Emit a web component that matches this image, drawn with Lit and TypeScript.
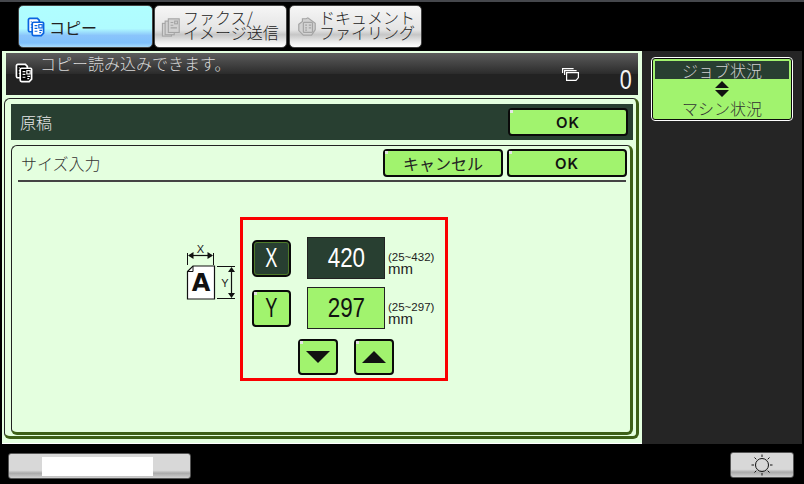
import { LitElement, html, css, svg } from "lit";
import { customElement } from "lit/decorators.js";

const copyIcon = (fill: string, stroke: string, inner: string) => svg`
<svg width="18" height="20" viewBox="0 0 19 21">
  <path d="M3 1.500h8l2 2v12H3a1.500 1.500 0 0 1-1.500-1.500V3A1.500 1.500 0 0 1 3 1.500z" fill="${fill}" stroke="${stroke}" stroke-width="1.800"/>
  <path d="M7 5.500h9.500a1.500 1.500 0 0 1 1 1V17l-2.500 2.500H7a1.500 1.500 0 0 1-1.500-1.500V7A1.500 1.500 0 0 1 7 5.500z" fill="${fill}" stroke="${stroke}" stroke-width="1.800"/>
  <path d="M4 5h1M4 8h1M4 11h1M8 9h3M8 12h3M8 15h3" stroke="${inner}" stroke-width="1.200"/>
  <rect x="12.500" y="8" width="3.500" height="3.500" fill="none" stroke="${inner}" stroke-width="1.200"/>
  <path d="M13 14h3M13 16.500h2" stroke="${inner}" stroke-width="1.200"/>
</svg>`;

const faxIcon = svg`
<svg width="21" height="20" viewBox="0 0 22 22" fill="#d2d2d2" stroke="#a4a4a4" stroke-width="1.200">
  <rect x="1" y="7" width="10" height="14"/><rect x="4" y="4.500" width="10" height="15"/><rect x="7.500" y="2" width="12" height="15"/>
  <path d="M10 6h3M10 9h3M10 12h7" fill="none"/><rect x="14.500" y="4.500" width="3" height="3" fill="none"/>
</svg>`;

const docIcon = svg`
<svg width="22" height="21" viewBox="0 0 22 23" fill="#d2d2d2" stroke="#a4a4a4" stroke-width="1.300">
  <path d="M2 9l4-3v-3h4l2-1 8 6v7l-4 6H7l-5-5z"/>
  <rect x="7" y="7" width="10" height="11" rx="1"/>
  <path d="M9 10h2M9 13h2M9 15.500h2M13 10h2.500M13 13h2.500" fill="none"/>
</svg>`;

const jobsIcon = svg`
<svg width="17" height="13" viewBox="0 0 17 13" fill="none" stroke="#fff" stroke-width="1.200">
  <path d="M.6 5V.6h11M2.600 7V2.600h12"/>
  <path d="M4.600 4.600h11.800v5l-2.400 2.800H4.600z" fill="#252525"/>
</svg>`;

const paperDiagram = svg`
<svg width="50" height="60" viewBox="0 0 50 60">
  <g fill="none" stroke="#111" stroke-width="1">
    <path d="M1.500 10v12M27.500 10v12M31 23.500h18M31 55.500h18"/>
    <path d="M3 12.500h23" stroke-width="1.200"/>
    <path d="M45.500 26v27" stroke-width="1.200"/>
    <path d="M1.500 28.500l5.500-5.500h21.500v33H1.500z" fill="#fff" stroke-width="1.200"/>
    <path d="M1.500 28.500h5.500V23" stroke-width="1"/>
  </g>
  <path d="M2 12.500l5.500-3.500v7zM27 12.500l-5.500-3.500v7zM45.500 24l-3.500 5h7zM45.500 55l-3.500-5h7z" fill="#111"/>
  <text class="lx" x="14.500" y="9.500" text-anchor="middle">X</text>
  <text class="lx" x="39" y="44" text-anchor="middle">Y</text>
  <text class="la" x="15" y="48" text-anchor="middle">A</text>
</svg>`;

const sun = svg`
<svg width="22" height="22" viewBox="0 0 22 22" fill="none" stroke="#111" stroke-width="1">
  <circle cx="11" cy="11" r="6.500"/>
  <path d="M11 .5v2.500M11 19v2.500M.5 11H3M19 11h2.500M3.500 3.500l1.800 1.800M16.700 16.700l1.800 1.800M18.500 3.500l-1.800 1.800M5.300 16.700l-1.800 1.800"/>
</svg>`;

@customElement("app-root")
export class AppRoot extends LitElement {
  static styles = css`
    :host {
      display: flex;
      flex-direction: column;
      width: 804px;
      height: 484px;
      background: #000;
      overflow: hidden;
      font-family: "Noto Sans CJK JP", "Liberation Sans", sans-serif;
      color: #111;
    }
    svg { display: block; flex: none; overflow: visible; }
    .strip { height: 2px; background: #45474c; flex: none; }
    .tabs { display: flex; height: 43px; margin-top: 3px; padding-left: 18px; flex: none; }
    .tab {
      box-sizing: border-box;
      width: 133px;
      height: 43px;
      border-radius: 5px;
      display: flex;
      align-items: center;
      border: 1px solid #444;
      background: linear-gradient(#f6f6f6 0, #e4e4e4 58%, #c6c6c6 70%, #ececec 88%, #fff 100%);
    }
    .tab.active {
      width: 135px;
      margin-right: 1px;
      background: linear-gradient(#b0feff 0, #b0fbff 55%, #8ac4fb 72%, #7fc0fd 90%, #a8dcff 100%);
      padding-left: 8px;
      gap: 4px;
      font-size: 16px;
      font-weight: 400;
      color: #222;
    }
    .tab.second { margin-right: 2px; }
    .tab.two { padding-left: 6px; }
    .tab .lbl {
      font-size: 16px;
      line-height: 15px;
      white-space: pre;
      color: #222;
      font-weight: 300;
      margin: -3px 0 0 1px;
    }
    .body { display: flex; margin-top: 3px; height: 393px; flex: none; padding-left: 2px; }
    .left {
      box-sizing: border-box;
      width: 640px;
      background: #e4ffdf;
      padding: 2px 4px 0 4px;
      display: flex;
      flex-direction: column;
      border-bottom: 1px solid #fff;
    }
    .status {
      height: 42px;
      flex: none;
      background: linear-gradient(#5c5c5c 0, #2b2b2b 50%, #222 50%, #222 100%);
      color: #d8d8d8;
      display: flex;
      font-size: 16px;
      font-weight: 300;
    }
    .status .ic { margin: 10px 0 0 9px; }
    .status .msg { margin: 0 0 0 7px; line-height: 20px; }
    .status .jobs { margin: 15px 0 0 auto; }
    .status .num {
      margin: 12px 4px 0 39px;
      font: 28px/30px "Liberation Sans", sans-serif;
      color: #f4f4f4;
      display: inline-block;
      transform: scaleX(0.77);
    }
    .outer {
      box-sizing: border-box;
      flex: 1;
      margin: 3px 0 4px -2px;
      width: 635px;
      border: 1px solid #222;
      border-right: 3px solid #3d5f17;
      border-bottom: 3px solid #3d5f17;
      border-radius: 6px;
      padding: 5px 3px 1px 6px;
      display: flex;
      flex-direction: column;
    }
    .hdr {
      box-sizing: border-box;
      height: 36px;
      flex: none;
      background: #283f31;
      color: #e8e8e8;
      display: flex;
      align-items: center;
      justify-content: space-between;
      padding: 0 5px 0 9px;
      font-size: 16px;
      font-weight: 300;
    }
    .btn {
      box-sizing: border-box;
      background: #a1f36e;
      border: 2px solid #0a0a0a;
      border-radius: 4px;
      display: flex;
      align-items: center;
      justify-content: center;
      color: #111;
      position: relative;
    }
    .btn::before {
      content: "";
      position: absolute;
      left: 0;
      top: 0;
      width: 3px;
      height: 3px;
      background: #e4e4e4;
    }
    .btn.on::before { display: none; }
    .ok {
      font: 600 15px "Inter", sans-serif;
      letter-spacing: 1px;
    }
    .hdr .ok { width: 120px; height: 28px; }
    .inner {
      box-sizing: border-box;
      flex: 1;
      margin-top: 5px;
      border: 1px solid #222;
      border-right: 3px solid #3d5f17;
      border-bottom: 3px solid #3d5f17;
      border-radius: 6px;
      padding: 2px 4px 0 6px;
      display: flex;
      flex-direction: column;
    }
    .title {
      height: 30px;
      padding: 0 0 2px 3px;
      flex: none;
      border-bottom: 2px solid #444;
      display: flex;
      align-items: center;
      color: #333;
      font-size: 16px;
      font-weight: 300;
      gap: 4px;
    }
    .title span { margin-right: auto; }
    .title .cancel {
      width: 120px;
      height: 28px;
      font-size: 16px;
      font-weight: 400;
      color: #222;
    }
    .title .ok { width: 120px; height: 28px; margin-right: -1px; }
    .content {
      flex: 1;
      display: flex;
      align-items: flex-start;
      padding: 35px 0 0 168px;
    }
    .diagram { margin: 26px 0 0 0; width: 54px; flex: none; }
    .lx { font: 11px "Liberation Sans", sans-serif; fill: #222; }
    .la { font: bold 24px "DejaVu Sans", sans-serif; fill: #111; }
    .red {
      box-sizing: border-box;
      width: 208px;
      height: 164px;
      border: 3px solid #fa0000;
      padding: 17px 0 0 9px;
      display: flex;
      flex-direction: column;
      gap: 8px;
    }
    .row { display: flex; align-items: center; height: 42px; }
    .nar { display: inline-block; font-family: "Liberation Sans", sans-serif; }
    .xy {
      width: 39px;
      height: 37px;
      font-size: 28px;
      margin-right: 16px;
    }
    .xy .nar { transform: scaleX(0.65); }
    .xy.on { background: #283f31; color: #fff; border-radius: 5px; outline: 1px solid #4e7a2a; outline-offset: -3px; }
    .val {
      box-sizing: border-box;
      width: 78px;
      height: 42px;
      border: 1px solid #222;
      display: flex;
      align-items: center;
      justify-content: center;
      font-size: 28px;
      background: #a1f36e;
    }
    .val .nar { transform: scaleX(0.8); }
    .val.on { background: #283f31; color: #fff; }
    .rng {
      margin-left: 3px;
      display: flex;
      flex-direction: column;
      font-family: "Liberation Sans", sans-serif;
      color: #222;
      padding-top: 10px;
      white-space: nowrap;
    }
    .rng small { font-size: 11.500px; line-height: 12px; }
    .rng b { font-weight: 400; font-size: 15px; line-height: 12px; }
    .arrows { display: flex; gap: 16px; padding: 0 0 0 46px; margin-top: 2px; }
    .arrow { width: 40px; height: 36px; }
    .right { width: 160px; background: #252525; padding: 5px 0 0 9px; box-sizing: border-box; }
    .job {
      box-sizing: border-box;
      width: 142px;
      height: 64px;
      border: 2px solid #0a0a0a;
      outline: 1px solid #fff;
      outline-offset: -1px;
      border-radius: 4px;
      background: #a1f36e;
      display: flex;
      flex-direction: column;
      align-items: center;
      font-size: 16px;
      font-weight: 300;
      color: #333;
      overflow: hidden;
      padding: 2px;
      margin-top: 1px;
    }
    .job .a {
      background: #283f31;
      color: #d0d0d0;
      width: 100%;
      height: 18px;
      line-height: 18px;
      text-align: center;
      flex: none;
    }
    .job .mid { height: 18px; margin-top: 1px; }
    .job .b { line-height: 18px; margin-top: 1px; }
    .foot { display: flex; justify-content: space-between; padding: 8px 10px 0 8px; flex: 1; }
    .gbtn {
      box-sizing: border-box;
      height: 26px;
      border: 1px solid #555;
      border-radius: 3px;
      background: linear-gradient(#d8d8d8 0, #d8d8d8 68%, #aaa 80%, #d0d0d0 100%);
      display: flex;
      align-items: center;
      justify-content: center;
    }
    .g1 { width: 183px; margin-top: 1px; }
    .g1 i { display: block; width: 111px; height: 19px; background: #fff; margin-left: -5px; }
    .g2 { width: 64px; }
  `;

  render() {
    return html`
      <div class="strip"></div>
      <div class="tabs">
        <div class="tab active">${copyIcon("#fff", "#0a63e0", "#0a63e0")}<span>コピー</span></div>
        <div class="tab two second">${faxIcon}<span class="lbl">ファクス/
イメージ送信</span></div>
        <div class="tab two">${docIcon}<span class="lbl">ドキュメント
ファイリング</span></div>
      </div>
      <div class="body">
        <div class="left">
          <div class="status">
            <div class="ic">${copyIcon("#000", "#fff", "#fff")}</div>
            <div class="msg">コピー読み込みできます。</div>
            <div class="jobs">${jobsIcon}</div>
            <div class="num">0</div>
          </div>
          <div class="outer">
            <div class="hdr">
              <span>原稿</span>
              <div class="btn ok">OK</div>
            </div>
            <div class="inner">
              <div class="title">
                <span>サイズ入力</span>
                <div class="btn cancel">キャンセル</div>
                <div class="btn ok">OK</div>
              </div>
              <div class="content">
                <div class="diagram">${paperDiagram}</div>
                <div class="red">
                  <div class="row">
                    <div class="btn xy on"><span class="nar">X</span></div>
                    <div class="val on"><span class="nar">420</span></div>
                    <div class="rng"><small>(25~432)</small><b>mm</b></div>
                  </div>
                  <div class="row">
                    <div class="btn xy"><span class="nar">Y</span></div>
                    <div class="val"><span class="nar">297</span></div>
                    <div class="rng"><small>(25~297)</small><b>mm</b></div>
                  </div>
                  <div class="arrows">
                    <div class="btn arrow"><svg width="24" height="12" viewBox="0 0 24 12"><path d="M0 0h24L12 12z" fill="#111"/></svg></div>
                    <div class="btn arrow"><svg width="24" height="12" viewBox="0 0 24 12"><path d="M0 12h24L12 0z" fill="#111"/></svg></div>
                  </div>
                </div>
              </div>
            </div>
          </div>
        </div>
        <div class="right">
          <div class="job">
            <div class="a">ジョブ状況</div>
            <div class="mid"><svg width="14" height="18" viewBox="0 0 14 18"><path d="M7 1l7 7H0zM7 17l7-7H0z" fill="#111"/></svg></div>
            <div class="b">マシン状況</div>
          </div>
        </div>
      </div>
      <div class="foot">
        <div class="gbtn g1"><i></i></div>
        <div class="gbtn g2">${sun}</div>
      </div>
    `;
  }
}
